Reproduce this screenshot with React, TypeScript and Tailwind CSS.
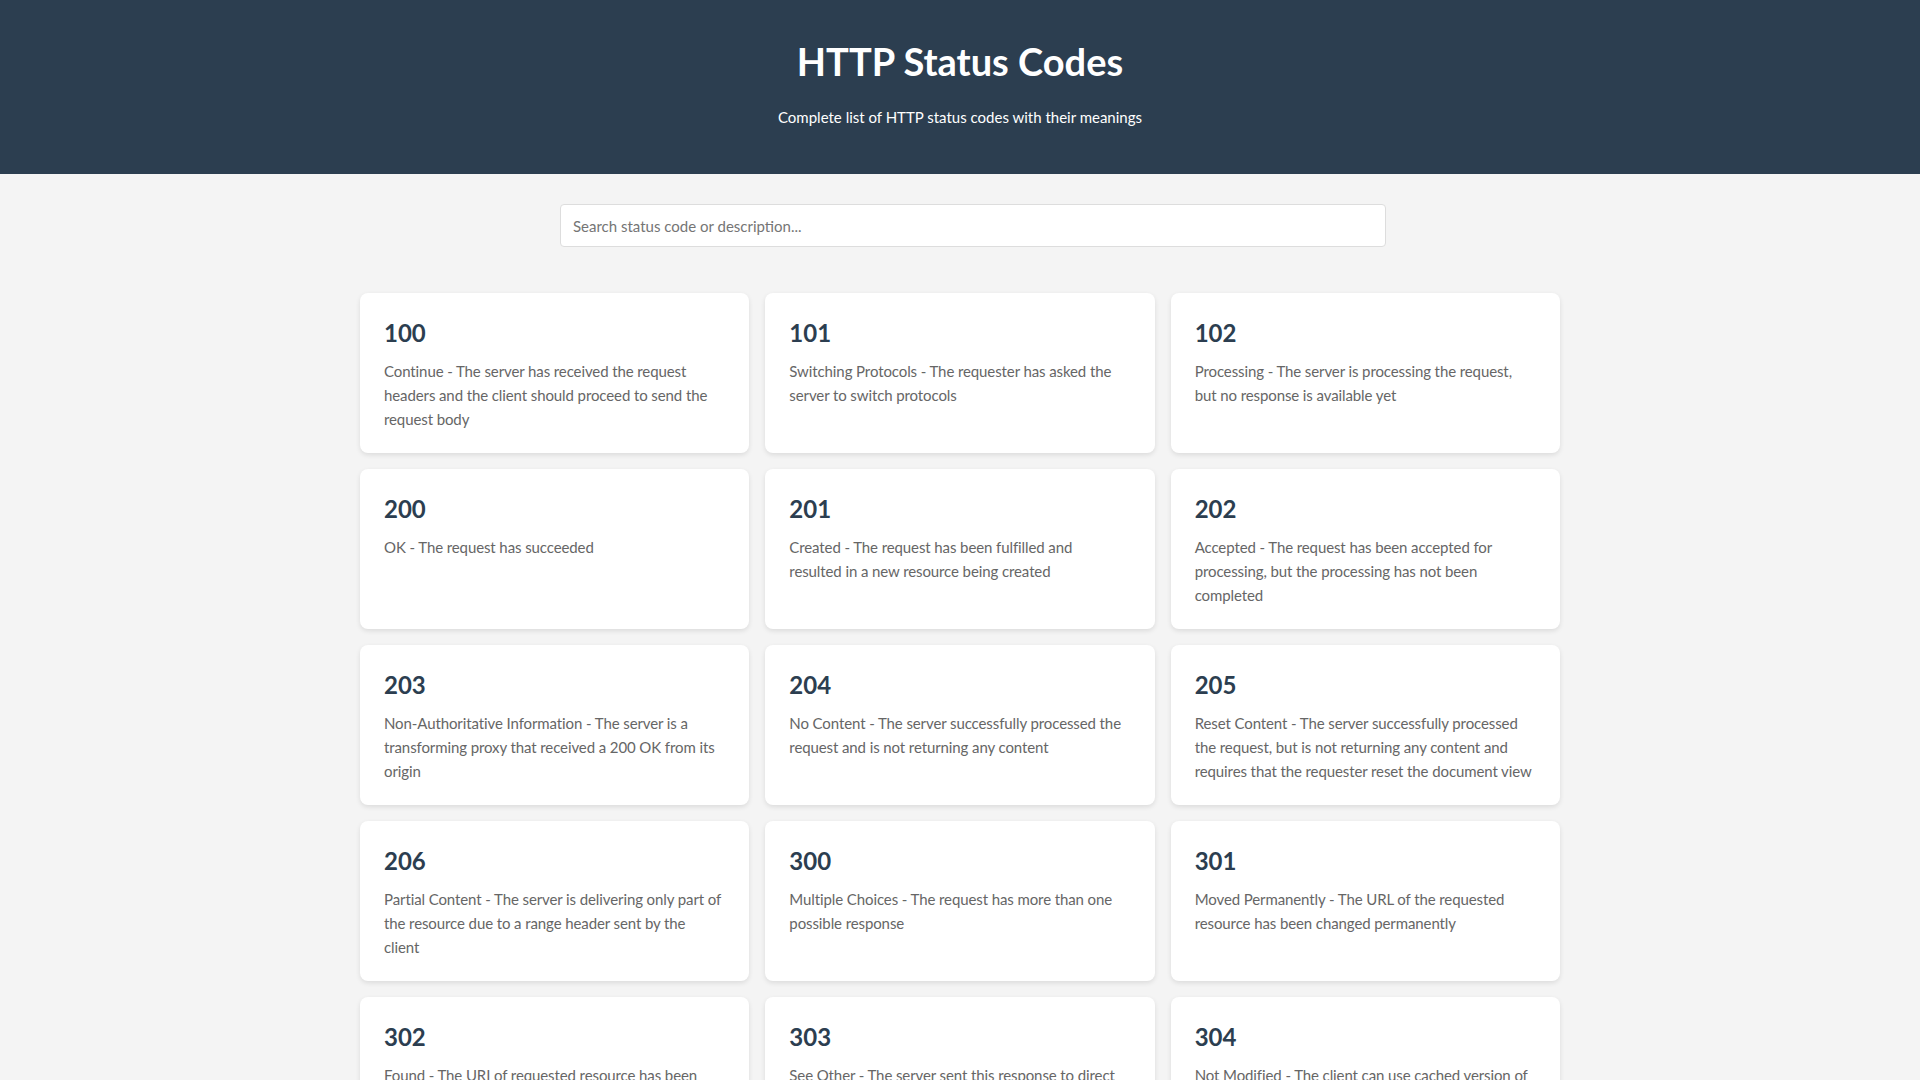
import { useState } from "react"

type StatusCode = {
  code: number
  text: string
}

const statusCodes: StatusCode[] = [
  { code: 100, text: "Continue - The server has received the request headers and the client should proceed to send the request body" },
  { code: 101, text: "Switching Protocols - The requester has asked the server to switch protocols" },
  { code: 102, text: "Processing - The server is processing the request, but no response is available yet" },
  { code: 200, text: "OK - The request has succeeded" },
  { code: 201, text: "Created - The request has been fulfilled and resulted in a new resource being created" },
  { code: 202, text: "Accepted - The request has been accepted for processing, but the processing has not been completed" },
  { code: 203, text: "Non-Authoritative Information - The server is a transforming proxy that received a 200 OK from its origin" },
  { code: 204, text: "No Content - The server successfully processed the request and is not returning any content" },
  { code: 205, text: "Reset Content - The server successfully processed the request, but is not returning any content and requires that the requester reset the document view" },
  { code: 206, text: "Partial Content - The server is delivering only part of the resource due to a range header sent by the client" },
  { code: 300, text: "Multiple Choices - The request has more than one possible response" },
  { code: 301, text: "Moved Permanently - The URL of the requested resource has been changed permanently" },
  { code: 302, text: "Found - The URI of requested resource has been changed temporarily" },
  { code: 303, text: "See Other - The server sent this response to direct the client to get the requested resource at another URI" },
  { code: 304, text: "Not Modified - The client can use cached version of the requested resource" },
  { code: 307, text: "Temporary Redirect - The request should be repeated with another URI" },
  { code: 308, text: "Permanent Redirect - The request and all future requests should be repeated using another URI" },
  { code: 400, text: "Bad Request - The server cannot process the request due to a client error" },
  { code: 401, text: "Unauthorized - Authentication is required and has failed or has not yet been provided" },
  { code: 403, text: "Forbidden - The client does not have access rights to the content" },
  { code: 404, text: "Not Found - The server can not find the requested resource" },
  { code: 500, text: "Internal Server Error - The server has encountered a situation it does not know how to handle" },
]

export default function App() {
  const [query, setQuery] = useState("")

  const filtered = statusCodes.filter(
    (s) => String(s.code).includes(query) || s.text.toLowerCase().includes(query.toLowerCase()),
  )

  return (
    <div className="min-h-screen bg-[#f4f4f4] font-['Segoe_UI','Lato',sans-serif]">
      <header className="bg-[#2c3e50] pt-[37px] pb-[45px] text-center text-white">
        <h1 className="text-[38px] font-bold leading-[48px]">HTTP Status Codes</h1>
        <p className="mt-5 text-[15px] leading-6">Complete list of HTTP status codes with their meanings</p>
      </header>

      <div className="mx-auto mt-[30px] w-[800px]">
        <input
          type="text"
          value={query}
          onChange={(e) => setQuery(e.target.value)}
          placeholder="Search status code or description..."
          className="h-[43px] w-[826px] rounded border border-[#dddddd] bg-white px-3 text-[15px] text-[#333] outline-none placeholder:text-[#757575]"
        />
      </div>

      <div className="mx-auto mt-[46px] grid w-[1200px] grid-cols-3 gap-4 pb-10">
        {filtered.map((s) => (
          <div key={s.code} className="rounded-lg bg-white px-6 pt-6 pb-[22px] shadow-[0_2px_5px_rgba(0,0,0,0.1)]">
            <h3 className="mb-[10px] text-2xl font-bold leading-8 text-[#2c3e50]">{s.code}</h3>
            <p className="pr-[3px] text-[15px] leading-6 tracking-[-0.1px] text-[#666]">{s.text}</p>
          </div>
        ))}
      </div>
    </div>
  )
}
